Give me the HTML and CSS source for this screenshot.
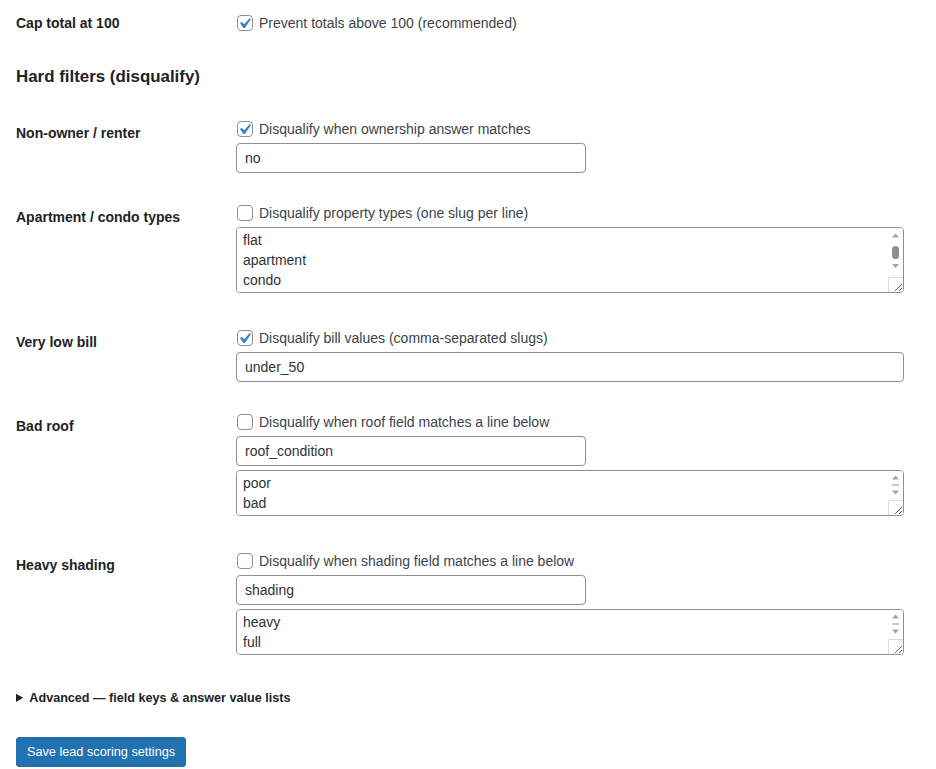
FILE: index.html
```html
<!DOCTYPE html>
<html lang="en">
<head>
<meta charset="utf-8">
<title>Lead scoring settings</title>
<link rel="stylesheet" href="styles.css">
</head>
<body>
<div class="wrap">
<form class="settings">
  <table class="form-table top-table">
    <tr>
      <th scope="row">Cap total at 100</th>
      <td>
        <label class="check"><span class="cb"><input type="checkbox" checked><svg class="tick" viewBox="0 0 20 20"><path d="M14.83 4.89l1.34.94-5.81 8.38H9.02L5.78 9.67l1.34-1.25 2.57 2.4z"/></svg></span>Prevent totals above 100 (recommended)</label>
      </td>
    </tr>
  </table>

  <h2 class="section-title">Hard filters (disqualify)</h2>

  <table class="form-table">
    <tr>
      <th scope="row">Non-owner / renter</th>
      <td>
        <label class="check"><span class="cb"><input type="checkbox" checked><svg class="tick" viewBox="0 0 20 20"><path d="M14.83 4.89l1.34.94-5.81 8.38H9.02L5.78 9.67l1.34-1.25 2.57 2.4z"/></svg></span>Disqualify when ownership answer matches</label>
        <input class="text regular-text" type="text" value="no">
      </td>
    </tr>
    <tr>
      <th scope="row">Apartment / condo types</th>
      <td>
        <label class="check"><span class="cb"><input type="checkbox"></span>Disqualify property types (one slug per line)</label>
        <div class="area-wrap">
          <textarea class="area rows3" rows="3">flat
apartment
condo
</textarea>
          <svg class="sbar sbar3" viewBox="0 0 15 64" aria-hidden="true">
            <path class="arr" d="M4 9.5h7L7.5 5.5z"/>
            <rect class="thumb" x="4" y="18" width="7" height="13" rx="3.5"/>
            <path class="arr" d="M4 36h7l-3.5 4z"/>
            <path class="corner" d="M0.5 64V49.5H15"/>
          </svg>
        </div>
      </td>
    </tr>
    <tr>
      <th scope="row">Very low bill</th>
      <td>
        <label class="check"><span class="cb"><input type="checkbox" checked><svg class="tick" viewBox="0 0 20 20"><path d="M14.83 4.89l1.34.94-5.81 8.38H9.02L5.78 9.67l1.34-1.25 2.57 2.4z"/></svg></span>Disqualify bill values (comma-separated slugs)</label>
        <input class="text large-text" type="text" value="under_50">
      </td>
    </tr>
    <tr>
      <th scope="row">Bad roof</th>
      <td>
        <label class="check"><span class="cb"><input type="checkbox"></span>Disqualify when roof field matches a line below</label>
        <input class="text regular-text" type="text" value="roof_condition">
        <div class="area-wrap">
          <textarea class="area rows2" rows="2">poor
bad
</textarea>
          <svg class="sbar sbar2" viewBox="0 0 15 44" aria-hidden="true">
            <path class="arr" d="M4 8.5h7L7.5 4.5z"/>
            <rect class="thumb" x="4" y="13.5" width="7" height="1"/>
            <path class="arr" d="M4 19.5h7l-3.5 4z"/>
            <path class="corner" d="M0.5 44V29.5H15"/>
          </svg>
        </div>
      </td>
    </tr>
    <tr>
      <th scope="row">Heavy shading</th>
      <td>
        <label class="check"><span class="cb"><input type="checkbox"></span>Disqualify when shading field matches a line below</label>
        <input class="text regular-text" type="text" value="shading">
        <div class="area-wrap">
          <textarea class="area rows2" rows="2">heavy
full
</textarea>
          <svg class="sbar sbar2" viewBox="0 0 15 44" aria-hidden="true">
            <path class="arr" d="M4 8.5h7L7.5 4.5z"/>
            <rect class="thumb" x="4" y="13.5" width="7" height="1"/>
            <path class="arr" d="M4 19.5h7l-3.5 4z"/>
            <path class="corner" d="M0.5 44V29.5H15"/>
          </svg>
        </div>
      </td>
    </tr>
  </table>

  <details class="advanced">
    <summary>Advanced — field keys &amp; answer value lists</summary>
  </details>

  <p class="submit"><button type="button" class="button-primary">Save lead scoring settings</button></p>
</form>
</div>
</body>
</html>
```

FILE: styles.css
```css
html, body {
  margin: 0;
  padding: 0;
  background: #ffffff;
}

body {
  font-family: "Liberation Sans", Arial, sans-serif;
  font-size: 14px;
  line-height: 1.3;
  color: #3c434a;
}

.wrap {
  margin: 0 15px 0 16px;
}

.settings {
  margin: 0;
}

.form-table {
  width: 100%;
  border-collapse: collapse;
  border-spacing: 0;
  margin: 0;
}

.form-table th {
  width: 200px;
  padding: 20px 10px 20px 0;
  text-align: left;
  vertical-align: top;
  font-size: 14px;
  font-weight: 700;
  line-height: 1.3;
  color: #1d2327;
}

.form-table td {
  padding: 15px 10px;
  vertical-align: top;
  line-height: 1.3;
}

.top-table th {
  padding-top: 14px;
}

.top-table td {
  padding-top: 13px;
}

.check {
  display: flex;
  align-items: center;
  height: 20px;
  gap: 6px;
  color: #3c434a;
  font-size: 14px;
  white-space: nowrap;
}

.cb {
  position: relative;
  display: inline-flex;
  width: 16px;
  height: 16px;
  margin-left: 1px;
  flex: none;
}

.cb input {
  -webkit-appearance: none;
  appearance: none;
  box-sizing: border-box;
  width: 16px;
  height: 16px;
  margin: 0;
  border: 1px solid #8c8f94;
  border-radius: 4px;
  background: #fff;
}

.cb .tick {
  position: absolute;
  left: -3px;
  top: -2px;
  width: 21px;
  height: 21px;
  fill: #3582c4;
  pointer-events: none;
}

.text {
  display: block;
  box-sizing: border-box;
  height: 30px;
  margin: 4px 0 0;
  padding: 0 8px;
  font-family: inherit;
  font-size: 14px;
  line-height: 2;
  color: #2c3338;
  background: #fff;
  border: 1px solid #8c8f94;
  border-radius: 4px;
  outline: none;
}

.regular-text {
  width: 350px;
}

.large-text {
  width: 99%;
}

.area-wrap {
  position: relative;
  width: 99%;
  margin: 4px 0 5px;
}

.area {
  display: block;
  box-sizing: border-box;
  width: 100%;
  margin: 0;
  padding: 2px 22px 2px 6px;
  font-family: inherit;
  font-size: 14px;
  line-height: 20px;
  color: #2c3338;
  background: #fff;
  border: 1px solid #8c8f94;
  border-radius: 4px;
  overflow-y: auto;
  outline: none;
}

.rows3 {
  height: 66px;
}

.rows2 {
  height: 46px;
}

.sbar {
  position: absolute;
  top: 1px;
  right: 1px;
  width: 15px;
  pointer-events: none;
}

.sbar3 {
  height: 64px;
}

.sbar2 {
  height: 44px;
}

.sbar .arr {
  fill: #a3a3a3;
}

.sbar .thumb {
  fill: #8f8f8f;
}

.sbar .corner {
  fill: none;
  stroke: #dcdcde;
  stroke-width: 1;
}

.section-title {
  margin: 14px 0 16px;
  font-size: 16.9px;
  line-height: 22px;
  font-weight: 700;
  color: #1d2327;
}

.advanced {
  margin: 14px 0 0;
}

.advanced summary {
  font-size: 12.6px;
  line-height: 18px;
  font-weight: 700;
  color: #1d2327;
  cursor: pointer;
}

.submit {
  margin: 0;
  padding: 30px 0 0;
}

.button-primary {
  box-sizing: border-box;
  height: 30px;
  padding: 0 10px;
  font-family: inherit;
  font-size: 12.7px;
  line-height: 28px;
  color: #fff;
  background: #2271b1;
  border: 1px solid #2271b1;
  border-radius: 3px;
  cursor: pointer;
}
```
